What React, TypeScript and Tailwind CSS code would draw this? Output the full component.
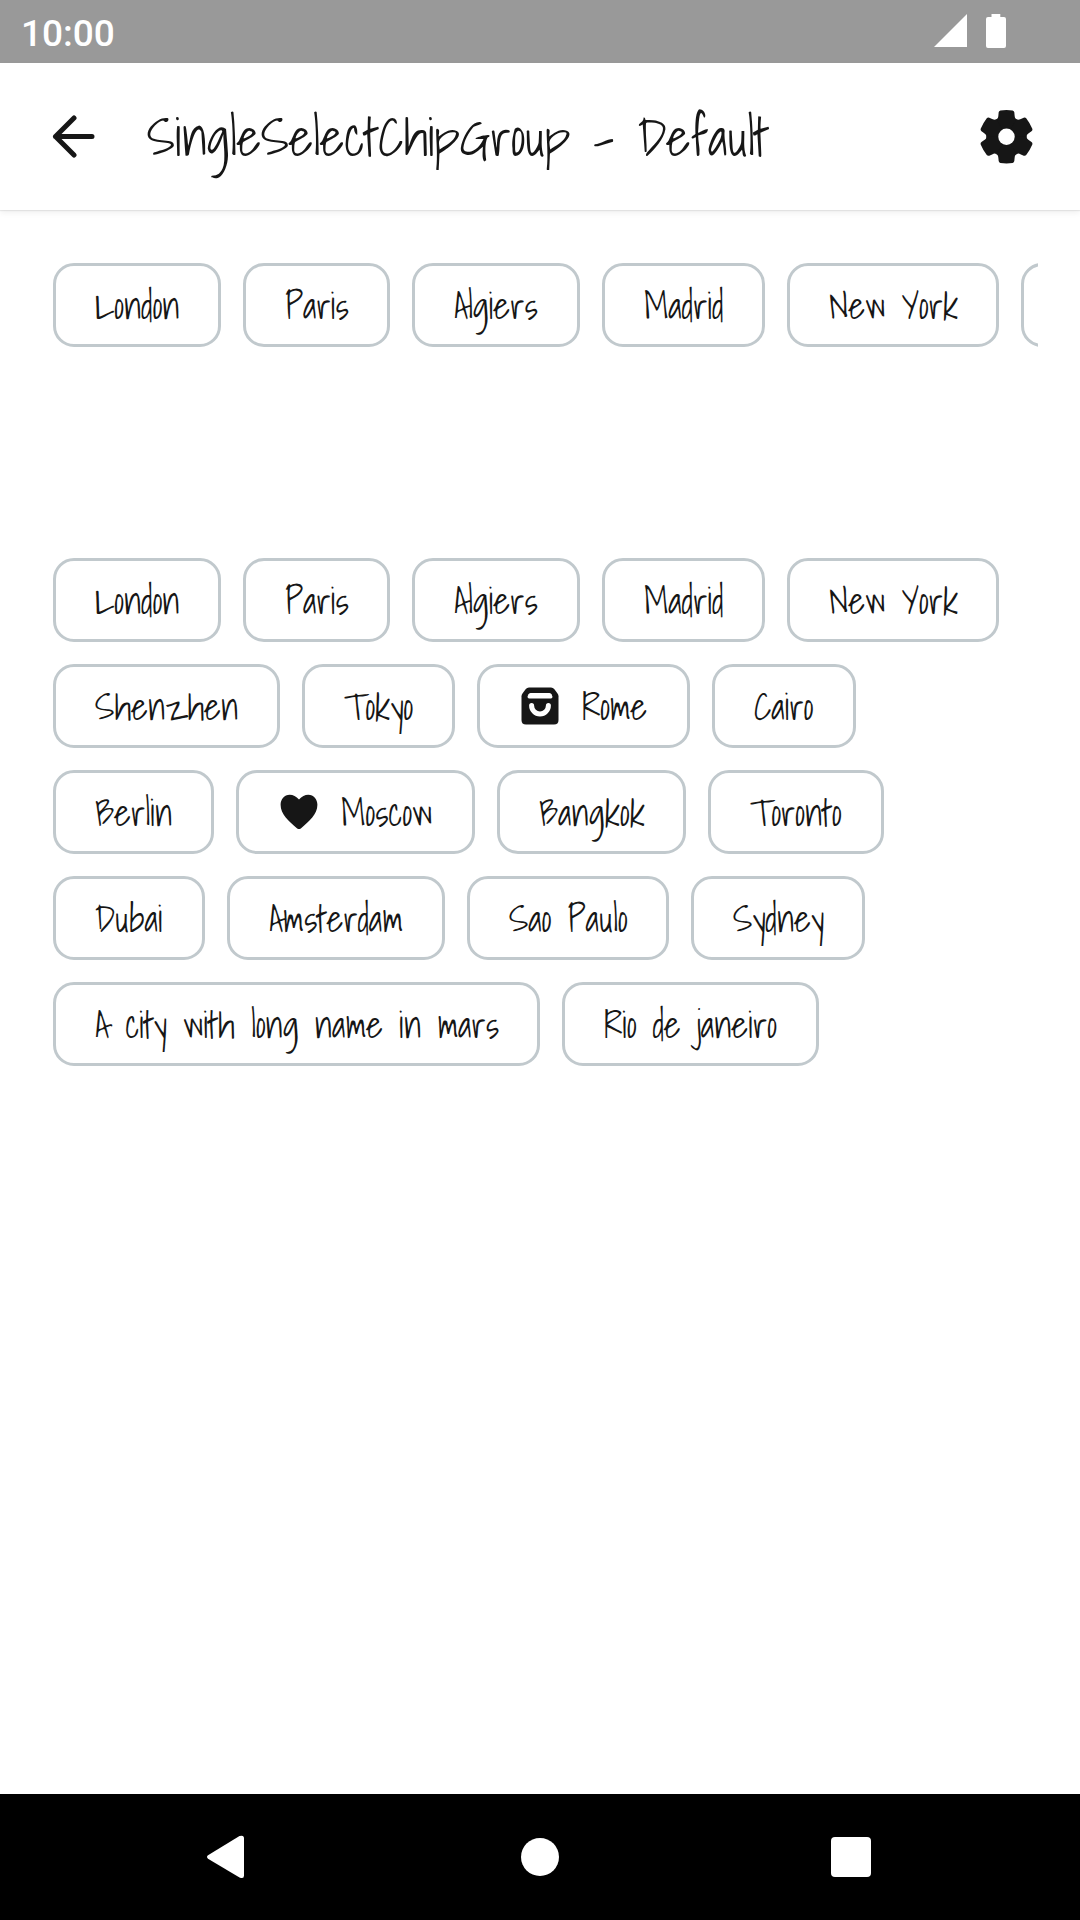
import type { ReactNode } from "react";

type City = { name: string; size: string; icon?: ReactNode };

const Heart = () => (
  <svg className="mr-[21px] size-[42px] shrink-0" viewBox="-21 -21 42 42" fill="#161616">
    <path d="M0-12.4C2.8-15.8 5.9-17.3 9.3-17.3C14.7-17.3 18.4-12.7 18.4-7.2C18.4 2.2 10.2 9.5 1.8 16.4Q0 17.8-1.8 16.4C-10.2 9.5-18.4 2.2-18.4-7.2C-18.4-12.7-14.7-17.3-9.3-17.3C-5.9-17.3-2.8-15.8 0-12.4Z" />
  </svg>
);

const Bag = () => (
  <svg className="mr-[21px] size-[42px] shrink-0" viewBox="-21 -21 42 42">
    <path
      fill="#161616"
      d="M-11-18.5H11Q13-18.5 14.2-17L17.7-12.3Q18.5-11.2 18.5-9.8V14Q18.5 18.5 14 18.5H-14Q-18.5 18.5-18.5 14V-9.8Q-18.5-11.2-17.7-12.3L-14.2-17Q-13-18.5-11-18.5Z"
    />
    <path fill="#fff" d="M-9.5-13H9.5Q11-13 11.7-11.5L12.4-9.5Q12.8-7.5 10.8-7.5H-10.8Q-12.8-7.5-12.4-9.5L-11.7-11.5Q-11-13-9.5-13Z" />
    <path fill="none" stroke="#fff" strokeWidth="5" strokeLinecap="round" d="M-8.4-.5a8.4 8.4 0 0 0 16.8 0" />
  </svg>
);

const firstRow: City[] = [
  { name: "London", size: "w-[168px]" },
  { name: "Paris", size: "w-[147px]" },
  { name: "Algiers", size: "w-[168px]" },
  { name: "Madrid", size: "w-[163px]" },
  { name: "New York", size: "w-[212px]" },
];

const rows: City[][] = [
  firstRow,
  [
    { name: "Shenzhen", size: "w-[227px]" },
    { name: "Tokyo", size: "w-[153px]" },
    { name: "Rome", size: "w-[213px]", icon: <Bag /> },
    { name: "Cairo", size: "w-[144px]" },
  ],
  [
    { name: "Berlin", size: "w-[161px]" },
    { name: "Moscow", size: "w-[239px]", icon: <Heart /> },
    { name: "Bangkok", size: "w-[189px]" },
    { name: "Toronto", size: "w-[176px]" },
  ],
  [
    { name: "Dubai", size: "w-[152px]" },
    { name: "Amsterdam", size: "w-[218px]" },
    { name: "Sao Paulo", size: "w-[202px]" },
    { name: "Sydney", size: "w-[174px]" },
  ],
  [
    { name: "A city with long name in mars", size: "w-[487px]" },
    { name: "Rio de janeiro", size: "w-[257px]" },
  ],
];

function Chip({ city }: { city: City }) {
  return (
    <button
      className={`flex h-[84px] shrink-0 items-center rounded-[21px] border-3 border-[#c1c9cd] pl-[39px] text-[36px] leading-[42px] whitespace-nowrap text-[#161616] ${city.size}`}
    >
      {city.icon}
      <span className="pt-[2px]">{city.name}</span>
    </button>
  );
}

const toothAngles = [0, 60, 120, 180, 240, 300];

export default function App() {
  return (
    <div className="flex h-[1920px] w-[1080px] flex-col overflow-hidden bg-white font-['Shadows_Into_Light',Lato,sans-serif]">
      <div className="flex h-[63px] shrink-0 items-center bg-[#999] pl-[21px] text-white">
        <span className="pt-[4px] font-['Roboto',sans-serif] text-[37px] leading-[44px] font-medium">10:00</span>
        <svg className="mr-[74px] ml-auto h-[63px] w-[72px]" viewBox="934 0 72 63" fill="currentColor">
          <path d="M934 47L967 14V47Z" />
          <path d="M991.5 14h8.8v3h3.7q2 0 2 2v27q0 2-2 2h-16q-2 0-2-2V19q0-2 2-2h3.5Z" />
        </svg>
      </div>

      <header className="flex h-[147px] shrink-0 items-center bg-white pr-[46px] pl-[52px] text-[#161616] shadow-[0_1px_1px_rgba(0,0,0,0.07),0_3px_6px_rgba(0,0,0,0.06)]">
        <svg className="h-[44px] w-[44px]" viewBox="52 115 44 44" fill="none" stroke="currentColor" strokeWidth="5" strokeLinecap="round" strokeLinejoin="round">
          <path d="M92 136.5H55.5M74 118L55.5 136.5L74 155" />
        </svg>
        <h1 className="ml-[51px] text-[52px] leading-[64px] tracking-[-0.03px] whitespace-nowrap">SingleSelectChipGroup - Default</h1>
        <svg className="ml-auto size-[54px]" viewBox="-26.1 -26.3 53.2 53.2" fill="currentColor">
          <circle r="19.6" />
          {toothAngles.map((angle) => (
            <path
              key={angle}
              transform={`rotate(${angle})`}
              d="M-10-17.3C-8.6-17.6-8.2-19-8-21L-7.7-24Q-7.5-25.6-6-25.9Q0-26.7 6-25.9Q7.5-25.6 7.7-24L8-21C8.2-19 8.6-17.6 10-17.3L0 0Z"
            />
          ))}
          <circle r="8.1" fill="#fff" />
        </svg>
      </header>

      <main className="flex-1 pt-[53px] pr-[42px] pl-[53px]">
        <div className="flex gap-[22px] overflow-hidden">
          {[...firstRow, rows[1][0]].map((city) => (
            <Chip key={city.name} city={city} />
          ))}
        </div>
        <div className="mt-[211px] flex flex-col gap-[22px]">
          {rows.map((row, i) => (
            <div key={i} className="flex gap-[22px]">
              {row.map((city) => (
                <Chip key={city.name} city={city} />
              ))}
            </div>
          ))}
        </div>
      </main>

      <nav className="flex h-[126px] shrink-0 items-center bg-black pr-[209px] pl-[206px] text-white">
        <svg className="h-[44px] w-[40px]" viewBox="206 1835 40 44" fill="currentColor">
          <path d="M208 1855.3L239.5 1836.1Q244 1834.5 244 1838.5V1875.5Q244 1879.5 239.5 1877.4L208 1858.7Q206 1857 208 1855.3Z" />
        </svg>
        <span className="ml-[275px] size-[38px] rounded-full bg-white" />
        <span className="ml-auto size-[40px] rounded-[4px] bg-white" />
      </nav>
    </div>
  );
}
